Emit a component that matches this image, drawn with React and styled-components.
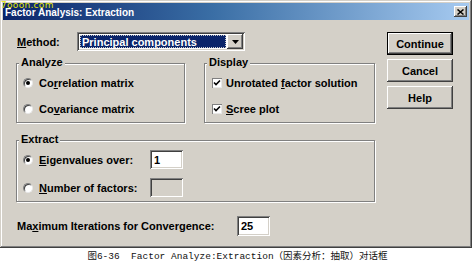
import React from "react";
import styled, { createGlobalStyle } from "styled-components";

const Global = createGlobalStyle`
  html, body { margin: 0; padding: 0; background: #fff; }
  body { font-family: "Liberation Sans", Arial, sans-serif; }
`;

const Page = styled.div`
  position: relative;
  width: 475px;
  height: 264px;
  display: flex;
  flex-direction: column;
  overflow: hidden;
`;

const Watermark = styled.div`
  position: absolute;
  left: 1px;
  top: 0;
  font: 9px/10px "DejaVu Sans", sans-serif;
  color: #e6e600;
  letter-spacing: 0.3px;
  z-index: 2;
`;

const Dialog = styled.div`
  width: 472px;
  height: 248px;
  box-sizing: border-box;
  padding: 3px;
  background: #d4d0c8;
  box-shadow: inset -1px -1px #404040, inset 1px 1px #d4d0c8,
    inset -2px -2px #808080, inset 2px 2px #fff;
  display: flex;
  flex-direction: column;
`;

const TitleBar = styled.div`
  height: 17px;
  display: flex;
  align-items: center;
  justify-content: space-between;
  padding: 0 2px 0 2px;
  background: linear-gradient(to right, #0a246a 0%, #3a6ea5 45%, #a6caf0 100%);
`;

const TitleText = styled.span`
  color: #fff;
  font-weight: bold;
  font-size: 10px;
  margin-top: 2px;
`;

const CloseButton = styled.div`
  width: 13px;
  height: 11px;
  background: #d4d0c8;
  box-shadow: inset -1px -1px #404040, inset 1px 1px #fff, inset -2px -2px #808080;
  display: flex;
  align-items: center;
  justify-content: center;
`;

const Body = styled.div`
  display: flex;
  padding: 12px 0 0 13px;
`;

const Main = styled.div`
  width: 359px;
  display: flex;
  flex-direction: column;
`;

const ButtonCol = styled.div`
  margin-left: 12px;
  display: flex;
  flex-direction: column;
  gap: 4px;
`;

const Button = styled.div`
  width: 66px;
  height: 23px;
  box-sizing: border-box;
  display: flex;
  align-items: center;
  justify-content: center;
  font-size: 11px;
  font-weight: bold;
  color: #000;
  background: #d4d0c8;
  border: ${(p) => (p.$default ? "1px solid #000" : "0")};
  box-shadow: inset -1px -1px #404040, inset 1px 1px #fff,
    inset -2px -2px #808080, inset 2px 2px #d4d0c8;
`;

const Label = styled.span`
  font-size: 11px;
  font-weight: bold;
  color: #000;
  white-space: nowrap;
  width: ${(p) => (p.$w ? `${p.$w}px` : "auto")};
  flex: none;
  padding-left: ${(p) => (p.$pl ? `${p.$pl}px` : "0")};
  box-sizing: border-box;
`;

const Key = styled.span`
  text-decoration: underline;
  text-underline-offset: 1px;
`;

const MethodRow = styled.div`
  height: 19px;
  display: flex;
  align-items: center;
`;

const Combo = styled.div`
  width: 168px;
  height: 19px;
  box-sizing: border-box;
  padding: 2px;
  background: #fff;
  box-shadow: inset 1px 1px #808080, inset -1px -1px #fff,
    inset 2px 2px #404040, inset -2px -2px #d4d0c8;
  display: flex;
`;

const ComboValue = styled.div`
  flex: 1;
  margin: 1px;
  background: #0a246a;
  outline: 1px dotted #c8c8c8;
  outline-offset: -1px;
  color: #fff;
  font-size: 11px;
  font-weight: bold;
  display: flex;
  align-items: center;
  padding-left: 2px;
`;

const ArrowButton = styled.div`
  width: 16px;
  background: #d4d0c8;
  box-shadow: inset -1px -1px #404040, inset 1px 1px #fff, inset -2px -2px #808080;
  display: flex;
  align-items: center;
  justify-content: center;
`;

const GroupRow = styled.div`
  display: flex;
  gap: 19px;
  margin-top: 12px;
`;

const Group = styled.div`
  position: relative;
  width: ${(p) => p.$w}px;
  box-sizing: border-box;
  border: 1px solid #808080;
  box-shadow: inset 1px 1px #fff, 1px 1px #fff;
  margin-top: ${(p) => (p.$mt ? `${p.$mt}px` : "0")};
  padding: ${(p) => p.$pad};
  display: flex;
  flex-direction: column;
  gap: ${(p) => p.$gap}px;
`;

const Legend = styled.span`
  position: absolute;
  left: 2px;
  top: -8px;
  padding: 0 2px;
  background: #d4d0c8;
  font-size: 11px;
  font-weight: bold;
  line-height: 13px;
  color: #000;
`;

const OptionRow = styled.div`
  height: ${(p) => p.$h || 16}px;
  display: flex;
  align-items: center;
`;

const Radio = styled.span`
  width: 10px;
  height: 10px;
  box-sizing: border-box;
  border-radius: 50%;
  background: #fff;
  border: 1px solid;
  border-color: #808080 #e8e8e8 #e8e8e8 #808080;
  box-shadow: inset 1px 1px #404040;
  margin-right: 6px;
  flex: none;
  display: flex;
  align-items: center;
  justify-content: center;
  &::after {
    content: "";
    width: 4px;
    height: 4px;
    border-radius: 50%;
    background: ${(p) => (p.$on ? "#000" : "transparent")};
  }
`;

const Check = styled.span`
  width: 10px;
  height: 10px;
  box-sizing: border-box;
  background: #fff;
  box-shadow: inset 1px 1px #808080, inset -1px -1px #e8e8e8;
  margin-right: 4px;
  flex: none;
  display: flex;
  align-items: center;
  justify-content: center;
`;

const TextBox = styled.div`
  width: ${(p) => p.$w}px;
  height: ${(p) => p.$h}px;
  box-sizing: border-box;
  padding: 0 4px;
  background: ${(p) => (p.$disabled ? "#d4d0c8" : "#fff")};
  box-shadow: inset 1px 1px #808080, inset -1px -1px #fff,
    inset 2px 2px #404040, inset -2px -2px #d4d0c8;
  display: flex;
  align-items: center;
  font-size: 11px;
  font-weight: bold;
  color: #000;
  flex: none;
`;

const MaxRow = styled.div`
  height: 20px;
  margin-top: 14px;
  display: flex;
  align-items: center;
`;

const Caption = styled.div`
  margin-top: 3px;
  height: 12px;
  line-height: 12px;
  text-align: center;
  font-family: "Liberation Mono", "Noto Sans CJK SC", monospace;
  font-size: 9.5px;
  color: #111;
  white-space: pre;
`;

const CheckMark = () => (
  <svg width="8" height="8" viewBox="0 0 8 8">
    <path d="M1 3.5 L3 5.5 L7 1.5" stroke="#000" strokeWidth="1.6" fill="none" />
  </svg>
);

export default function App() {
  return (
    <Page>
      <Global />
      <Watermark>7ooon.com</Watermark>
      <Dialog>
        <TitleBar>
          <TitleText>Factor Analysis: Extraction</TitleText>
          <CloseButton>
            <svg width="7" height="6" viewBox="0 0 7 6">
              <path d="M0.5 0.5 L6.5 5.5 M6.5 0.5 L0.5 5.5" stroke="#000" strokeWidth="1.5" />
            </svg>
          </CloseButton>
        </TitleBar>
        <Body>
          <Main>
            <MethodRow>
              <Label $w={61} $pl={1}>
                <Key>M</Key>ethod:
              </Label>
              <Combo>
                <ComboValue>Principal components</ComboValue>
                <ArrowButton>
                  <svg width="7" height="4" viewBox="0 0 7 4">
                    <path d="M0 0 H7 L3.5 4 Z" fill="#000" />
                  </svg>
                </ArrowButton>
              </Combo>
            </MethodRow>
            <GroupRow>
              <Group $w={169} $pad="11px 0 5px 6px" $gap={10}>
                <Legend>Analyze</Legend>
                <OptionRow>
                  <Radio $on />
                  <Label>
                    Co<Key>r</Key>relation matrix
                  </Label>
                </OptionRow>
                <OptionRow>
                  <Radio />
                  <Label>
                    Co<Key>v</Key>ariance matrix
                  </Label>
                </OptionRow>
              </Group>
              <Group $w={171} $pad="11px 0 5px 7px" $gap={10}>
                <Legend>Display</Legend>
                <OptionRow>
                  <Check>
                    <CheckMark />
                  </Check>
                  <Label>
                    Unrotated <Key>f</Key>actor solution
                  </Label>
                </OptionRow>
                <OptionRow>
                  <Check>
                    <CheckMark />
                  </Check>
                  <Label>
                    <Key>S</Key>cree plot
                  </Label>
                </OptionRow>
              </Group>
            </GroupRow>
            <Group $w={359} $mt={17} $pad="9px 0 4px 6px" $gap={9}>
              <Legend>Extract</Legend>
              <OptionRow $h={19}>
                <Radio $on />
                <Label $w={111}>
                  <Key>E</Key>igenvalues over:
                </Label>
                <TextBox $w={33} $h={19}>1</TextBox>
              </OptionRow>
              <OptionRow $h={19}>
                <Radio />
                <Label $w={111}>
                  <Key>N</Key>umber of factors:
                </Label>
                <TextBox $w={33} $h={19} $disabled />
              </OptionRow>
            </Group>
            <MaxRow>
              <Label $w={221} $pl={1}>
                Ma<Key>x</Key>imum Iterations for Convergence:
              </Label>
              <TextBox $w={33} $h={20}>25</TextBox>
            </MaxRow>
          </Main>
          <ButtonCol>
            <Button $default>Continue</Button>
            <Button>Cancel</Button>
            <Button>Help</Button>
          </ButtonCol>
        </Body>
      </Dialog>
      <Caption>{"图6-36  Factor Analyze:Extraction（因素分析：抽取）对话框"}</Caption>
    </Page>
  );
}
